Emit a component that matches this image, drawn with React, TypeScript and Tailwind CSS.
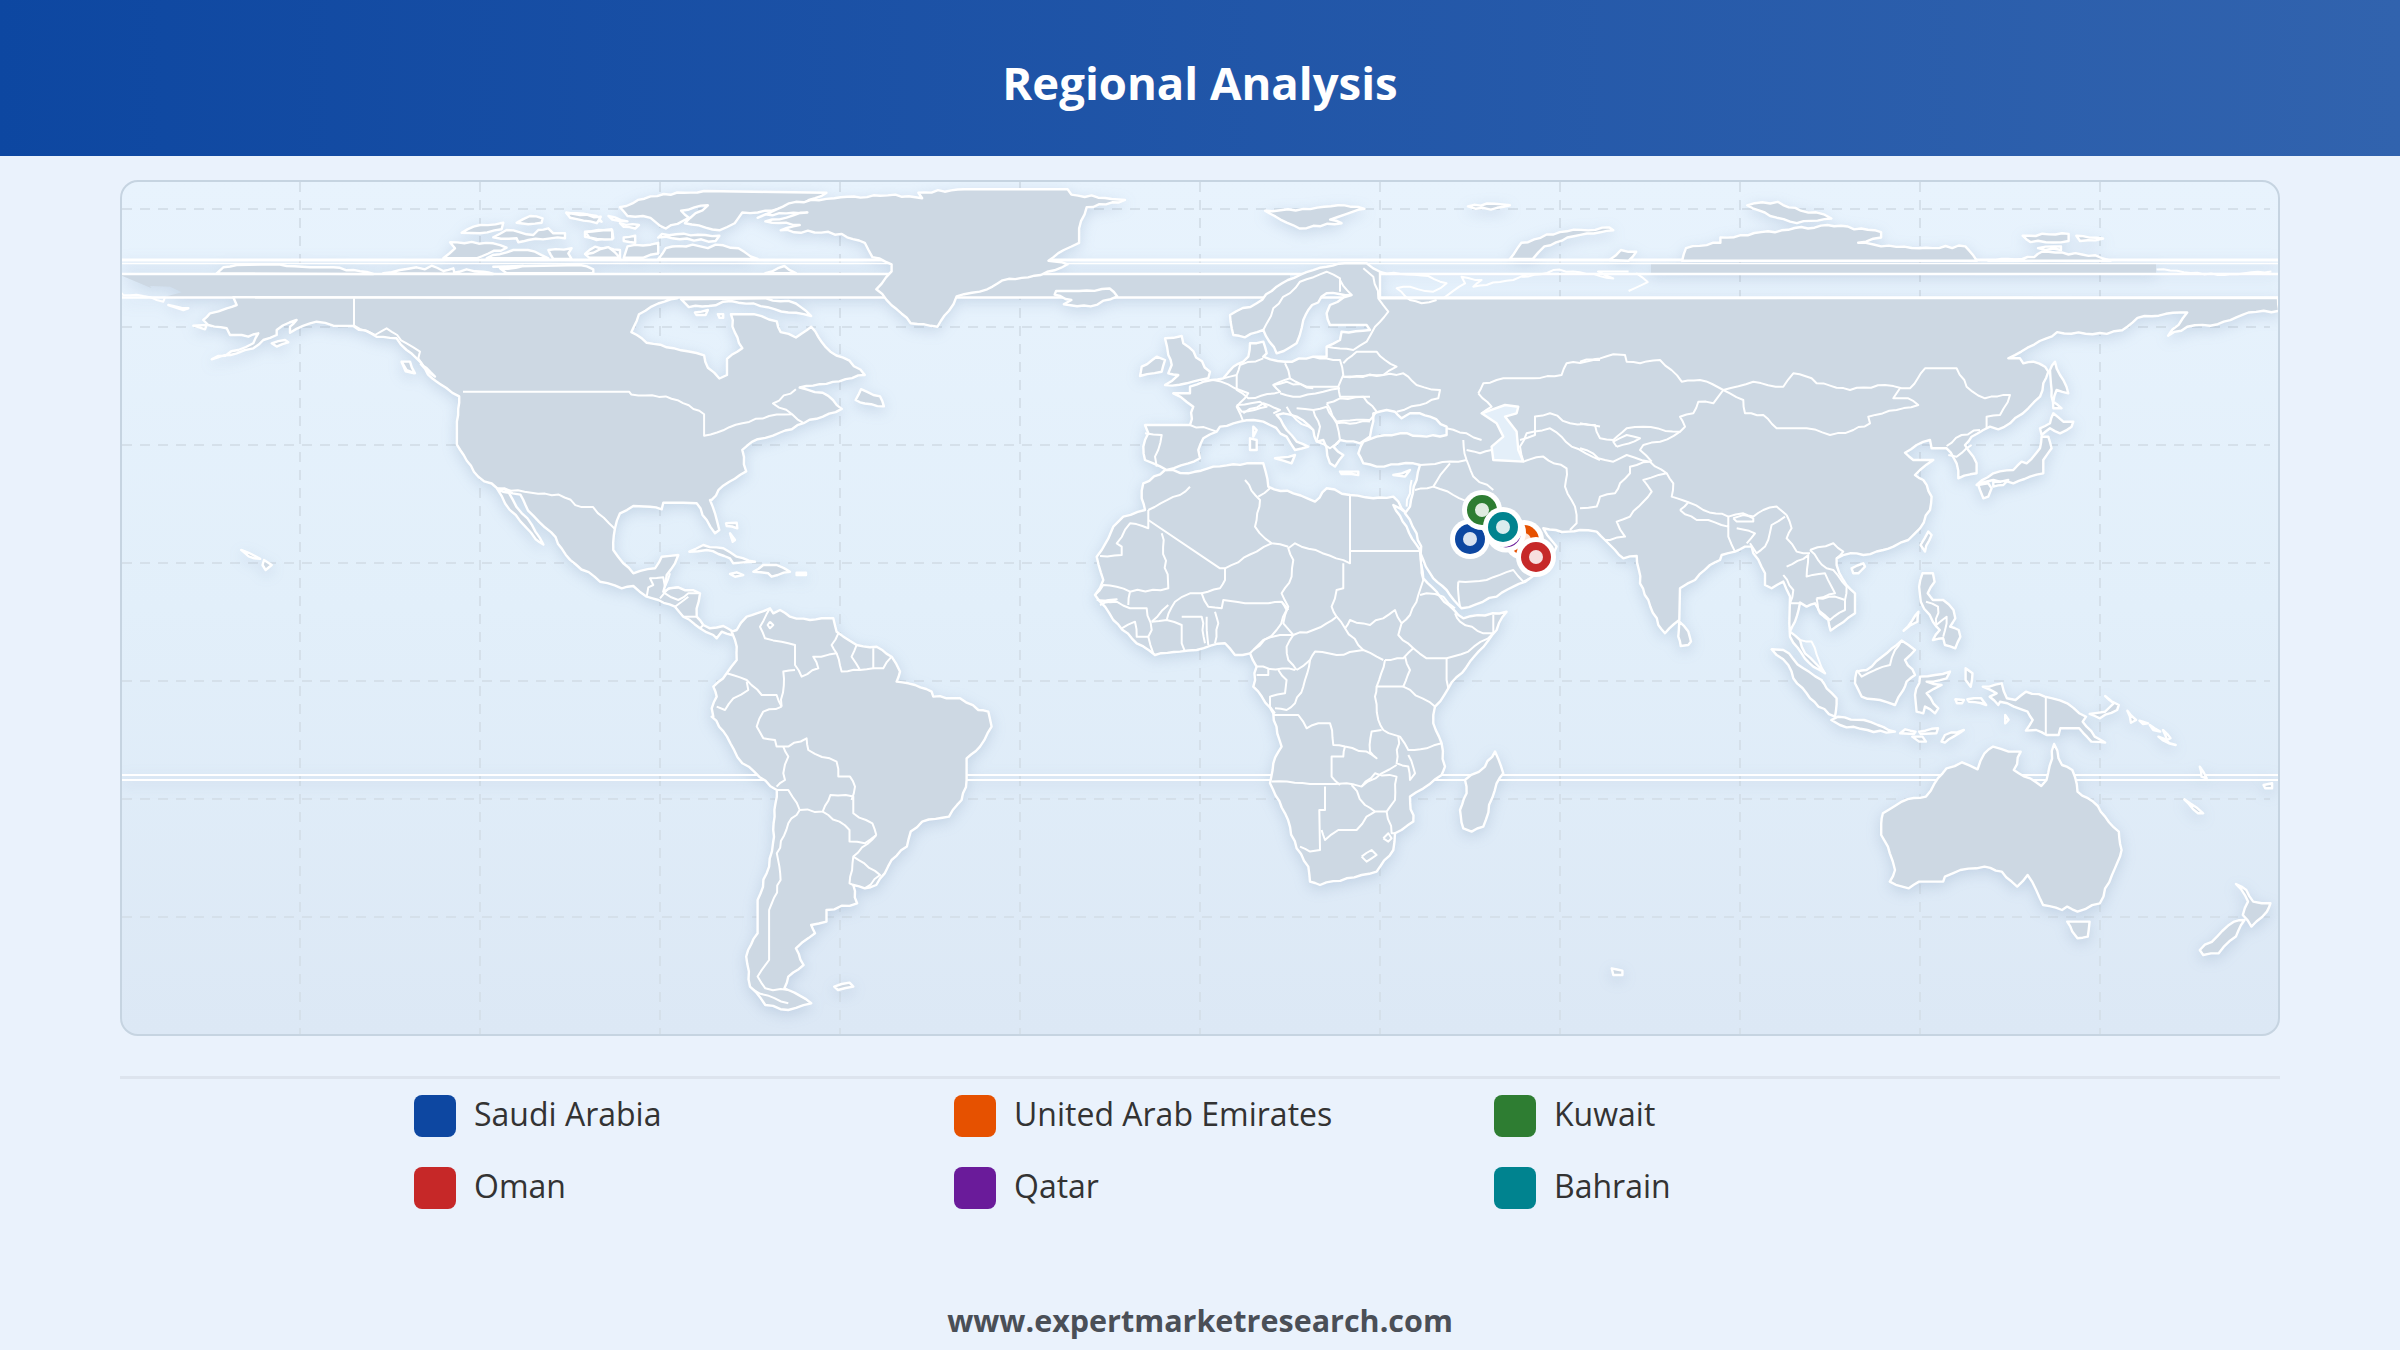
type Z = [number, number, number, number];

// each zoom crop of the map has its own origin and scale, points are written in crop pixels
const Z1: Z = [0, 0, 0.7653, 0.3571];
const Z2: Z = [1200, 0, 0.7653, 0.3571];
const Z3: Z = [0, 560, 0.7653, 0.3333];
const Z4: Z = [1200, 560, 0.7653, 0.3333];
const Z7: Z = [1100, 250, 0.3333, 0.3333];
const Z8: Z = [1080, 480, 0.3333, 0.3333];
const Z9: Z = [1580, 320, 0.3333, 0.3333];
const Z10: Z = [1740, 560, 0.3444, 0.3333];
const Z11: Z = [120, 180, 0.3333, 0.3333];
const Z12: Z = [600, 500, 0.3333, 0.3333];

const seg = (z: Z, s: string) =>
  s
    .trim()
    .split(/\s+/)
    .map((p) => {
      const [x, y] = p.split(',').map(Number);
      return `${(z[0] + x * z[2]).toFixed(1)},${(z[1] + y * z[3]).toFixed(1)}`;
    })
    .join(' ');

// breaks up medium edges so coasts look hand-surveyed, axis-aligned and long edges stay straight
const rough = (points: string, closed: boolean) => {
  const pts = points.trim().split(/\s+/).map((p) => p.split(',').map(Number));
  const out: string[] = [];
  const count = closed ? pts.length : pts.length - 1;
  for (let i = 0; i < count; i++) {
    const [x1, y1] = pts[i];
    const [x2, y2] = pts[(i + 1) % pts.length];
    out.push(`${x1},${y1}`);
    const dx = x2 - x1;
    const dy = y2 - y1;
    const len = Math.hypot(dx, dy);
    if (len < 9 || len > 70 || Math.abs(dx) < 1 || Math.abs(dy) < 1) continue;
    const steps = Math.max(2, Math.round(len / 7));
    for (let k = 1; k < steps; k++) {
      const t = k / steps;
      const h = Math.sin((x1 + k) * 12.9898 + (y1 - k) * 78.233) * 43758.5453;
      const off = (h - Math.floor(h) - 0.5) * Math.min(2.6, len * 0.12);
      out.push(`${(x1 + dx * t - (dy / len) * off).toFixed(1)},${(y1 + dy * t + (dx / len) * off).toFixed(1)}`);
    }
  }
  if (!closed) out.push(pts[pts.length - 1].join(','));
  return out.join(' ');
};

const LAND: string[] = [
  // north america
  seg(Z11, '340,352 350,375 320,385 270,400 250,420 265,435 320,445 330,465 365,465 385,470 415,460 400,490 355,510 275,538 350,520 400,505 430,480 470,465 470,450 530,420 510,440 510,458 570,430 590,425 640,437 700,438 770,470 830,475 860,510 890,535 915,565 945,590') +
    ' ' + seg(Z1, '550,1020 565,1060 575,1075 600,1110 597,1180 597,1245 610,1290 625,1335 650,1368 680,1385 690,1430 720,1490 745,1568') +
    ' ' + seg(Z12, '0,245 65,265 100,258 140,290 175,300 225,320 250,350 300,385 340,405 350,415 365,395 395,405 400,395 370,378 330,385 310,375 290,350 300,280 235,262 210,265 190,275 200,225 225,190 235,165 185,170 165,205 100,220 70,190 40,150 45,85 60,40 100,18 150,20 185,28 190,8 250,8 290,10 320,60 345,100 358,90 345,40 330,0') +
    ' ' + seg(Z1, '930,1400 945,1360 975,1320 970,1260 990,1230 1010,1220 1050,1185 1100,1145 1075,1100 1045,1085 1080,1075 1130,1050 1110,1010 1085,985 1060,915 1040,945 1020,930 1015,900 985,880 955,880 960,930 970,975 950,1005 950,1050 940,1060 925,1030 920,995 880,975 845,960 825,930 835,880 860,850 885,835'),
  seg(Z1, '890,838 900,860 935,855 945,845 985,850 1030,875 1060,885 1040,850 1000,835'),
  seg(Z1, '650,1370 665,1380 675,1420 695,1470 710,1525 700,1510 680,1460 660,1410'),
  seg(Z1, '1125,1090 1150,1110 1155,1138 1130,1130 1118,1120'),
  seg(Z1, '525,1015 535,1015 540,1045 530,1040'),
  seg(Z1, '908,875 925,868 922,882 910,882'),
  seg(Z1, '938,880 945,880 945,890 940,890'),
  seg(Z1, '315,1540 325,1548 340,1565 325,1558'),
  seg(Z3, '345,0 355,15 347,30 343,15'),
  // sliver between the artefact lines
  seg(Z11, '290,280 310,262 350,255 460,253 500,258 570,262 640,262 700,270 760,282'),
  seg(Z11, '790,280 840,270 890,262 915,268 935,257 970,273 1000,265 1003,278 1040,268 1090,275 1120,282'),
  seg(Z11, '1120,260 1210,258 1140,265 1160,280 1420,280 1420,268 1380,255'),
  seg(Z1, '1000,765 1025,745 1040,765'),
  // arctic canada
  seg(Z11, '1025,158 1080,135 1150,128 1145,148 1080,160'),
  seg(Z11, '1190,128 1230,108 1268,115 1265,128 1225,133'),
  seg(Z11, '1120,172 1160,150 1240,165 1255,150 1285,145 1300,160 1335,160 1335,175 1225,180 1195,187 1190,175'),
  seg(Z11, '970,235 1005,205 990,187 1120,190 1160,203 1070,235'),
  seg(Z11, '1100,235 1180,210 1245,215 1285,235'),
  seg(Z11, '1285,210 1355,205 1345,220 1355,237 1300,237'),
  seg(Z11, '1340,100 1445,125 1430,108 1370,100'),
  seg(Z11, '1395,155 1475,148 1480,175 1430,180 1395,170'),
  seg(Z11, '1395,222 1425,200 1500,210 1500,237 1430,237'),
  seg(Z11, '455,490 495,480 505,487 470,500'),
  seg(Z11, '845,545 870,545 885,580 860,570'),
  seg(Z11, '145,375 205,385 190,390'),
  seg(Z11, '220,437 260,435 255,448'),
  seg(Z1, '740,595 785,607 780,625 745,610'),
  seg(Z1, '795,605 820,620 800,615'),
  seg(Z1, '765,650 800,645 800,670 770,665'),
  seg(Z1, '810,625 835,630 830,640 815,635'),
  seg(Z1, '815,665 830,660 830,680 815,675'),
  seg(Z1, '765,712 795,692 810,722 770,722'),
  seg(Z1, '815,722 820,690 860,680 860,710 840,722'),
  seg(Z1, '810,580 850,550 920,535 1080,540 1050,570 1000,590 970,595 960,625 940,645 895,625 925,575 890,590 900,610 870,640 850,610 820,605'),
  seg(Z1, '865,655 940,660 935,675 860,665'),
  seg(Z1, '860,725 870,695 905,685 925,695 935,685 965,695 990,725'),
  // greenland and iceland
  seg(Z1, '990,610 1040,565 1090,555 1150,548 1170,545 1205,555 1200,540 1260,530 1395,530 1400,545 1470,560 1420,580 1410,640 1410,680 1390,700 1370,730 1395,740 1360,770 1310,785 1290,810 1250,830 1240,870 1225,915 1190,905 1165,855 1145,810 1165,760 1165,740 1140,720 1130,680 1100,655 1020,645 1045,630 1000,620 1055,595 1000,600'),
  seg(Z1, '1380,815 1410,815 1450,808 1460,830 1425,858 1390,852 1400,840 1378,825'),
  // caribbean
  seg(Z12, '268,155 310,135 370,145 410,170 465,185 400,190 390,175 320,150'),
  seg(Z12, '460,215 490,195 530,195 570,215 515,230 505,220'),
  seg(Z12, '390,222 410,217 430,225 405,230'),
  seg(Z12, '590,218 618,218 618,225 590,225'),
  seg(Z12, '378,70 410,68 412,85 380,78'),
  seg(Z12, '390,100 405,120 398,125'),
  // south america
  seg(Z12, '410,390 440,350 470,340 510,325 520,340 540,330 570,350 630,360 665,355 700,355 710,395 770,435 830,440 875,470 900,515 890,545 925,550 945,555 995,575 1000,590 1080,595 1135,630 1165,635 1175,680 1140,740 1100,775 1100,840 1085,900') +
    ' ' + seg(Z3, '1245,750 1240,770 1205,785 1190,815 1185,860 1165,900 1145,975 1130,985 1115,975 1120,1030 1080,1050 1080,1085 1060,1095 1065,1120 1040,1165 1050,1215 1030,1250 1025,1285 1030,1290 1060,1330 1030,1350 1000,1335 980,1280 975,1190 990,1120 990,1020 1005,920 1010,850 1015,690 970,610 950,530 930,470') +
    ' ' + seg(Z12, '340,650 335,625 350,590 340,560 380,520 410,480 405,420 395,395'),
  seg(Z3, '1090,1280 1110,1268 1115,1280 1095,1290'),
  // africa
  seg(Z7, '130,700 195,660 265,670 340,650 440,640 490,640 505,710 580,730 645,755 680,715 750,735 820,745 880,740 920,790 880,765 920,830 960,900 970,985 1020,1040 1075,1095') +
    ' ' + seg(Z8, '1150,415 1280,395 1250,450 1170,545 1105,625 1065,680 1060,730 1085,790 1095,860 1085,885 990,950 1000,1025 945,1060 940,1110 890,1175 800,1195 720,1215 690,1205 685,1160 650,1105 615,1000 570,910 580,850 605,800 580,700 520,620 530,560 510,520 465,525 435,490 350,510 300,515 225,525 170,490 100,420 45,345 70,300 50,230 65,210 100,140 130,110 195,90 185,55'),
  seg(Z8, '1245,815 1270,880 1250,910 1210,1040 1175,1055 1150,1045 1140,990 1160,940 1155,900 1215,860'),
  // eurasia
  seg(Z7, '840,145 840,145') +
    ' 2278,298 ' + seg(Z2, '1410,870 1370,875 1330,908 1290,915 1265,940 1290,875 1225,890 1205,925 1185,935 1120,930 1090,965') +
    ' ' + seg(Z9, '1285,115 1320,115 1330,130 1360,125 1395,140 1405,155 1390,190 1380,230 1345,265 1290,310 1255,328 1230,320 1210,330 1175,350 1155,375 1190,430 1190,460 1135,475 1130,430 1100,385 1055,385 1050,360 1010,375 975,398 1000,420 1060,420 1020,450 1005,465 1030,480 1055,530 1050,570 1020,625 985,660 940,680 910,690 850,705 810,700 770,715 770,735 790,780 825,820 825,880 752,932 745,900 720,880 705,850 680,860 660,848 645,905 630,935 660,960 675,1000 735,1060 700,1040 665,1000 630,950 628,910 630,830 610,785 575,805 555,795 555,760 520,700 515,680 495,680 465,695 425,705 420,720 390,735 345,780 300,805 298,900 255,940 235,915 205,840 180,790 170,708 130,715 105,690 75,660 50,635 0,630') +
    ' ' + seg(Z7, '1405,845 1330,835 1370,890 1345,940 1290,985 1240,1010 1190,1040 1085,1075 1075,1065 1040,1020 1000,985 970,930 950,850 915,790 930,770 950,690 960,645 940,640 830,650 790,640 775,610 790,575 830,560 900,550 980,560 1040,555 1040,530 990,500 960,490 930,490 905,505 885,485 860,480 820,490 810,560 780,580 720,570 700,590 730,615 705,650 690,640 670,570 650,575 640,540 590,500 550,490 530,495 560,540 590,575 625,590 585,600 560,560 510,525 490,515 460,510 420,515 360,530 350,545 310,565 295,600 300,625 265,640 200,660 160,640 135,630 130,590 145,550 135,525 270,525 280,470 220,430 270,430 270,410 335,390 370,385 400,350 430,335 445,320 450,280 490,275 500,310 490,320 555,335 640,320 680,320 680,290 720,270 725,245 810,240 800,225 690,225 680,190 690,165 755,135 680,130 625,180 610,210 590,280 530,310 490,240 435,262 400,255 390,195 470,160 530,110 600,75 680,50 735,40 800,40 840,65'),
  // uk, ireland, med islands
  seg(Z7, '195,265 245,258 250,280 265,290 330,365 325,385 260,400 195,405 235,375 205,370 215,345 205,315'),
  seg(Z7, '125,350 170,320 195,330 185,365 120,378'),
  seg(Z7, '460,530 470,540 460,560'),
  seg(Z7, '450,565 470,570 470,600 450,600'),
  seg(Z7, '525,625 585,615 575,640'),
  seg(Z7, '720,665 775,665 775,675 725,672'),
  seg(Z7, '880,675 930,660 915,680'),
  // arctic russia
  seg(Z2, '85,590 135,585 180,575 215,585 190,600 170,615 185,625 130,640 105,615'),
  seg(Z2, '350,578 375,570 405,575 380,587'),
  seg(Z2, '405,725 420,680 470,650 535,637 540,645 480,665 450,690 435,725'),
  seg(Z2, '715,575 755,565 785,590 815,600 825,612 780,625 745,605'),
  seg(Z2, '630,730 635,695 680,680 680,665 760,645 820,630 890,650 890,665 860,680 890,690 940,695 1000,690 1015,730'),
  seg(Z2, '1030,730 1090,720 1100,705 1170,715 1190,730'),
  seg(Z2, '1075,660 1135,655 1135,675 1085,678'),
  seg(Z2, '1145,660 1180,668 1150,675'),
  seg(Z2, '1095,695 1125,690 1125,700'),
  seg(Z2, '535,728 550,700 570,705 560,730'),
  // east asia islands
  seg(Z9, '1410,150 1425,125 1440,165 1465,220 1430,210 1420,245 1445,265 1420,265 1415,210'),
  seg(Z9, '1420,280 1450,305 1480,305 1475,320 1440,340 1410,325 1385,345 1380,325 1410,310'),
  seg(Z9, '1385,350 1405,350 1415,385 1390,420 1390,460 1350,470 1300,490 1240,480 1190,495 1240,460 1300,450 1325,425 1340,430 1380,385'),
  seg(Z9, '1195,495 1225,490 1235,505 1225,530 1210,535 1200,510'),
  seg(Z9, '1240,485 1285,480 1270,495 1240,500'),
  seg(Z9, '1045,635 1055,645 1035,695 1022,675'),
  seg(Z9, '815,745 850,730 855,740 835,760 820,760'),
  seg(Z9, '298,905 325,935 333,965 325,975 302,978 295,950'),
  seg(Z9, '575,988 610,990 670,1045 725,1080 740,1105 770,1135 765,1190 715,1160 680,1120 640,1075 625,1035'),
  seg(Z9, '830,1055 860,1050 920,1000 965,962 1005,990 975,1020 1005,1065 980,1085 970,1110 945,1155 900,1140 845,1130 825,1090'),
  seg(Z9, '1020,1070 1110,1055 1100,1075 1040,1085 1085,1095 1040,1120 1060,1150 1075,1165 1065,1180 1035,1160 1030,1180 1010,1175 1005,1125'),
  // oceania
  seg(Z10, '530,40 560,40 565,65 545,100 560,120 590,120 620,150 625,175 610,200 635,210 640,230 625,265 595,255 590,235 560,240 580,210 560,185 525,125 520,80'),
  seg(Z10, '475,212 510,165 518,155 515,185'),
  seg(Z10, '265,480 285,470 360,480 400,495 450,515 425,518 370,510 290,495'),
  seg(Z10, '465,520 480,508 510,515 505,522'),
  seg(Z10, '520,515 575,505 570,520 525,522'),
  seg(Z10, '500,530 530,530 540,545 520,545'),
  seg(Z10, '585,545 595,525 650,510 620,530 595,548'),
  seg(Z10, '705,380 760,370 775,415 800,420 830,395 885,410 950,430 1005,470 995,485 1030,530 1060,548 1020,545 985,505 930,505 925,525 890,525 860,510 830,512 850,480 835,455 755,425 750,435 725,410 745,400'),
  seg(Z10, '1015,462 1060,455 1085,430 1060,408 1100,435 1095,450 1045,475'),
  seg(Z10, '1125,452 1150,480 1135,488'),
  seg(Z10, '1160,482 1185,490 1170,492'),
  seg(Z10, '1190,495 1220,515 1200,510'),
  seg(Z10, '1228,510 1250,535 1240,540'),
  seg(Z10, '1215,530 1265,555 1245,550'),
  seg(Z10, '655,325 675,340 670,380 655,360'),
  seg(Z10, '625,418 650,420 645,430 630,430'),
  seg(Z10, '660,418 700,415 715,435 665,425'),
  seg(Z10, '770,465 780,480 770,490'),
  seg(Z10, '1335,620 1355,655 1340,650'),
  seg(Z10, '1290,718 1345,760 1330,760'),
  seg(Z10, '1520,675 1545,670 1545,685 1525,685'),
  seg(Z10, '415,760 470,725 540,710 565,670 600,625 645,607 690,628 710,580 735,560 780,575 815,575 795,630 875,678 890,660 912,552 935,615 965,630 980,695 1025,725 1060,770 1100,815 1108,870 1080,945 1045,1030 980,1055 950,1040 935,1050 880,1035 860,990 835,945 805,980 760,935 710,920 640,930 595,950 590,965 520,965 490,985 435,965 450,930 435,880 410,825 410,790'),
  seg(Z10, '950,1085 1015,1085 1010,1130 980,1135 965,1115'),
  seg(Z10, '1440,972 1470,990 1490,1025 1540,1030 1530,1055 1485,1100 1460,1065 1475,1025'),
  seg(Z10, '1465,1080 1440,1130 1390,1180 1345,1185 1335,1170 1385,1130 1435,1085'),
  seg(Z4, '538,1225 552,1232 552,1245 540,1245'),
].map((p) => rough(p, true));

// small lakes and seas that sit on top of the land
const WATER: string[] = [seg(Z7, '1145,490 1215,465 1255,470 1250,490 1215,500 1250,545 1255,600 1270,635 1180,630 1175,590 1210,560 1190,520')];

const BORDERS: string[] = [
  // north america
  seg(Z1, '605,1097 822,1097 825,1105 870,1110 900,1135 920,1160 920,1220 945,1205 970,1185 1005,1165 1035,1160 1010,1130 1040,1090'),
  seg(Z1, '1050,1185 1035,1160'),
  seg(Z11, '702,355 702,435'),
  seg(Z11, '700,435 765,465 800,445 860,490 900,515 895,535 915,565'),
  seg(Z1, '650,1368 730,1385 760,1420 775,1420 803,1480'),
  seg(Z12, '140,290 145,262 160,255 150,235 190,232 195,260 210,220'),
  seg(Z12, '180,295 205,265 235,262'),
  seg(Z12, '195,280 235,300 265,280 300,280'),
  seg(Z12, '225,320 265,290'),
  seg(Z12, '250,350 290,350'),
  seg(Z12, '300,385 310,375'),
  // south america
  seg(Z12, '380,520 440,540 485,585 530,585 545,620'),
  seg(Z12, '350,620 375,630 400,595 445,570 440,545'),
  seg(Z12, '510,325 480,380 495,415 545,425 585,435 585,495 605,530 655,505 640,470 710,460 695,435 715,400'),
  seg(Z12, '510,365 520,375 510,385 503,375 510,365'),
  seg(Z12, '545,620 550,515 585,510'),
  seg(Z12, '710,460 725,515 780,510 755,470 770,435'),
  seg(Z12, '780,510 820,505 820,445'),
  seg(Z12, '820,505 850,505 875,470'),
  seg(Z12, '545,620 490,635 470,680 490,715 525,720 530,740 565,740 620,715 625,750 710,785 715,830 750,830 765,860 755,900'),
  seg(Z12, '550,740 565,770 550,820 555,840 530,860'),
  seg(Z3, '1045,750 1075,755 1085,705 1115,710 1115,760 1140,790 1145,825'),
  seg(Z3, '1075,755 1110,810 1110,845 1130,850 1145,825'),
  seg(Z3, '1145,825 1115,890 1110,970 1115,975'),
  seg(Z3, '1115,890 1150,945 1130,985'),
  seg(Z3, '1015,690 1030,690 1045,750 1030,790 1015,880 1020,960 1005,1050 1005,1130 1005,1200 990,1250 1000,1285 1030,1290'),
  seg(Z3, '985,1290 1030,1330'),
  // africa
  seg(Z8, '205,90 205,145 150,130 110,190 125,200 125,225 60,228'),
  seg(Z8, '205,120 420,265 435,265 530,215 575,190'),
  seg(Z8, '245,160 265,325 150,335 145,375'),
  seg(Z8, '150,335 110,320 70,315 45,345'),
  seg(Z8, '495,0 540,60 525,140 575,190 625,200'),
  seg(Z8, '330,20 300,45 205,90'),
  seg(Z8, '535,50 570,25'),
  seg(Z8, '810,45 810,250 645,190 625,205 640,240 635,290 605,340 625,380 610,430 640,465'),
  seg(Z8, '810,213 1020,213'),
  seg(Z8, '435,265 435,300 420,325 365,340 385,380 425,385 430,360 495,370 565,370 605,365 625,390'),
  seg(Z8, '365,340 330,340 285,365 260,420'),
  seg(Z8, '790,250 790,325 770,330 755,380 770,410 740,430 700,450 640,465 620,500 625,540 650,570'),
  seg(Z8, '650,570 690,540 705,515 770,525 850,510 910,540'),
  seg(Z8, '770,410 795,445 850,510'),
  seg(Z8, '795,445 810,420 870,435 945,390 965,430 955,465 1000,505 970,535 915,540'),
  seg(Z8, '1020,213 1030,300 1015,345 990,405 965,430'),
  seg(Z8, '1020,345 1040,340 1090,350 1125,385'),
  seg(Z8, '1000,505 1040,535 1100,535 1165,515 1240,460 1210,460 1140,425 1125,400'),
  seg(Z8, '1240,460 1240,405'),
  seg(Z8, '1100,535 1100,600 1105,625'),
  seg(Z8, '975,530 990,570 970,620 1065,680'),
  seg(Z8, '915,540 890,620 970,620'),
  seg(Z8, '890,620 885,650 895,720 910,750 960,770 985,810 1040,805 1085,790'),
  seg(Z8, '905,750 875,755 870,815 890,835 860,815 795,800 760,795 750,730 715,730 680,745 655,705 580,705'),
  seg(Z8, '690,540 670,620 645,670 620,690 585,685'),
  seg(Z8, '530,560 645,570'),
  seg(Z8, '595,570 620,600 615,640 570,650 570,680 585,700'),
  seg(Z8, '530,585 565,585 565,565'),
  seg(Z8, '575,905 690,912 765,912 800,910 845,920 905,880 950,855'),
  seg(Z8, '795,800 790,830 755,830 755,890 780,915'),
  seg(Z8, '955,770 950,850 985,860 990,900 1005,880 985,825'),
  seg(Z8, '845,920 885,880 950,890 945,960 920,995 885,995 855,975 815,915'),
  seg(Z8, '735,920 735,990 718,990 720,1110 690,1115 660,1100'),
  seg(Z8, '725,1050 735,1080 775,1050 830,1050 860,1010 885,995'),
  seg(Z8, '920,995 935,1060 945,1060'),
  seg(Z8, '910,1075 925,1060 935,1075 925,1085 910,1075'),
  seg(Z8, '845,1130 875,1110 890,1125 860,1145 845,1130'),
  seg(Z8, '50,360 110,365 150,385 200,385 215,450 205,470 220,520'),
  seg(Z8, '125,445 165,425 170,470 205,470'),
  seg(Z8, '215,425 260,420 305,435 305,490 315,515'),
  seg(Z8, '305,410 365,410 375,490'),
  seg(Z8, '380,410 385,495'),
  seg(Z8, '405,395 415,430 405,490'),
  seg(Z8, '215,425 265,375'),
  seg(Z8, '605,365 620,390 590,450 520,510 510,520'),
  seg(Z8, '520,510 550,480 600,465 640,465'),
  seg(Z8, '60,365 110,358 60,375'),
  // europe
  seg(Z7, '490,240 520,175 600,95 680,65 720,85 720,125'),
  seg(Z7, '720,90 755,135'),
  seg(Z7, '790,55 820,80 835,145 865,185 825,230 800,275 760,300 680,290'),
  seg(Z7, '730,340 770,305 830,305 855,330 890,350 850,375 730,380'),
  seg(Z7, '555,340 570,385 620,410 715,410 730,375 720,330 640,320'),
  seg(Z7, '410,375 420,345 490,325'),
  seg(Z7, '570,385 520,405 540,425 445,445 410,420 410,375'),
  seg(Z7, '520,405 560,395 640,415'),
  seg(Z7, '540,430 600,440 670,425 720,415'),
  seg(Z7, '730,380 850,375 910,370 950,405 1020,420 1015,445 960,465 890,485'),
  seg(Z7, '810,440 720,440 715,410'),
  seg(Z7, '680,460 720,445 790,440 830,485 810,510 710,515 680,460'),
  seg(Z7, '710,520 810,515'),
  seg(Z7, '640,480 680,470 710,520 720,570'),
  seg(Z7, '410,465 480,455 500,470 425,485 410,465'),
  seg(Z7, '430,490 490,460 540,480 520,490'),
  seg(Z7, '340,390 405,415 445,430 410,470 430,515'),
  seg(Z7, '270,525 350,545'),
  seg(Z7, '135,550 185,555 165,620 170,650'),
  seg(Z7, '370,385 410,375'),
  seg(Z7, '590,475 640,480 660,530 650,575'),
  seg(Z7, '650,575 690,595 720,570'),
  seg(Z7, '560,470 590,510 640,540'),
  // middle east, central asia
  seg(Z7, '1040,535 1100,550 1145,570'),
  seg(Z7, '960,645 1050,635 1100,630'),
  seg(Z7, '1090,570 1100,630 1120,680 1180,720'),
  seg(Z7, '1000,710 1060,735 1130,770'),
  seg(Z7, '945,720 1000,710 1050,640'),
  seg(Z7, '935,690 920,770'),
  seg(Z7, '1075,995 1160,990 1240,960 1270,995 1290,985'),
  seg(Z7, '1075,995 1080,1070'),
  seg(Z7, '1135,430 1150,400 1210,385 1300,385 1385,375 1400,340 1500,330'),
  seg(Z7, '1135,430 1175,470 1145,490'),
  seg(Z7, '1100,600 1140,610 1175,600'),
  seg(Z7, '1270,635 1330,620 1400,655 1395,710 1425,770 1430,820 1410,840'),
  seg(Z7, '1270,635 1260,590 1280,550 1350,535 1415,590 1500,630'),
  seg(Z7, '1260,570 1305,555 1305,500 1350,490 1410,520 1500,530'),
  // asia
  seg(Z9, '0,125 100,103 135,105 140,125 180,130 240,120 305,185 360,180 430,210 520,185 610,200 640,160 695,175 710,190 810,210 915,195 965,205 990,205 1035,145 1130,145 1160,200 1215,235 1290,225 1260,285 1220,290 1220,325'),
  seg(Z9, '430,210 490,240 495,280 550,285 590,325 680,325 750,345 820,330 870,310 865,290 950,270 1015,255 985,235 940,235 960,205'),
  seg(Z9, '1100,378 1145,345 1200,330'),
  seg(Z9, '1105,405 1130,410 1175,375'),
  seg(Z9, '430,210 400,250 355,245 340,280 300,290 315,320 300,335 190,320 140,325 100,360 60,355 45,315 0,310'),
  seg(Z9, '300,335 240,365 190,375 180,390 215,425'),
  seg(Z9, '110,380 180,355 140,345 100,365 110,380'),
  seg(Z9, '0,385 75,420 100,425 140,405 210,425 150,440 150,460 120,490 105,520 60,530 50,560 0,565'),
  seg(Z9, '210,425 260,460 190,480 215,515 150,590 110,605 135,650 90,660 75,660'),
  seg(Z9, '300,570 325,547 370,570 445,590 445,620 385,600 350,600 300,570'),
  seg(Z9, '460,595 490,585 520,595 520,605 470,605 460,595'),
  seg(Z9, '260,460 280,490 275,530 325,547'),
  seg(Z9, '445,590 490,580 520,590 550,570 590,560 620,585'),
  seg(Z9, '445,620 445,650 465,695'),
  seg(Z9, '470,625 525,640 500,670'),
  seg(Z9, '615,590 575,615 555,680 530,700 510,670'),
  seg(Z9, '620,585 635,625 620,655 650,695 690,700'),
  seg(Z9, '690,690 760,670 790,695 770,715'),
  seg(Z9, '620,740 685,705 680,770 735,760 765,820 710,835'),
  seg(Z9, '690,690 740,745 760,750 800,800 795,840'),
  seg(Z9, '710,835 765,830 795,840 795,870 750,900 715,870 710,835'),
  seg(Z9, '610,765 640,810 630,850 660,850'),
  seg(Z9, '660,960 695,965 735,1060'),
  seg(Z9, '830,1050 845,1070 930,1035 945,990 965,962'),
  seg(Z10, '888,410 888,525'),
  seg(Z10, '540,125 575,140 570,195 600,170 590,230'),
  // coast outlines with no fill over the gap in the russian shape
  seg(Z7, '840,65 985,78 1040,100 1000,125 930,110 890,115 930,150 965,160 1010,150'),
  seg(Z7, '1030,145 1095,100 1085,80 1145,90 1120,110 1160,105 1240,90 1290,72'),
  seg(Z2, '560,815 585,790 570,765'),
  seg(Z2, '420,775 470,755 540,780 520,760 560,760'),
  seg(Z2, '1250,755 1330,770 1400,760'),
  seg(Z11, '0,335 10,345 70,348 110,360 130,365 135,352'),
].map((p) => rough(p, false));

const H_LINES = [209, 327, 445, 563, 681, 799, 917];
const V_LINES = [300, 480, 660, 840, 1020, 1200, 1380, 1560, 1740, 1920, 2100];

// the broken wrap-around bands of the source map
const BANDS = [
  seg(Z11, '0,285 1500,285') + ' 1290,274 1290,298 ' + seg(Z11, '130,352 185,337 150,320 90,318 95,325'),
  '1651,264 2156,264 2156,273 1651,273',
];
const BAND_LINES = [
  [260, 3],
  [263.5, 1.5],
  [274, 2.5],
  [297.5, 2.5],
  [775, 2],
  [780, 2],
];

const PINS = [
  { x: 1470, y: 539, color: '#0d47a1' },
  { x: 1524, y: 540, color: '#e65100' },
  { x: 1482, y: 510, color: '#2e7d32' },
  { x: 1536, y: 557, color: '#c62828' },
  { x: 1506, y: 532.5, color: '#6a1b9a' },
  { x: 1503, y: 527, color: '#00838f' },
];

const LEGEND = [
  { name: 'Saudi Arabia', color: 'bg-[#0d47a1]' },
  { name: 'United Arab Emirates', color: 'bg-[#e65100]' },
  { name: 'Kuwait', color: 'bg-[#2e7d32]' },
  { name: 'Oman', color: 'bg-[#c62828]' },
  { name: 'Qatar', color: 'bg-[#6a1b9a]' },
  { name: 'Bahrain', color: 'bg-[#00838f]' },
];

function WorldMap() {
  return (
    <svg viewBox="122 182 2156 852" width={2156} height={852} className="block">
      <g stroke="#d5e0ea" strokeWidth={2} strokeDasharray="10 8" fill="none">
        {H_LINES.map((y) => (
          <line key={y} x1={122} x2={2270} y1={y} y2={y} />
        ))}
        {V_LINES.map((x) => (
          <line key={x} x1={x} x2={x} y1={182} y2={1034} />
        ))}
      </g>
      <g className="drop-shadow-[0_4px_7px_rgba(90,120,160,0.2)]">
        {BANDS.map((p, i) => (
          <polygon key={i} points={p} fill="#cdd8e3" />
        ))}
        {BAND_LINES.map(([y, w]) => (
          <line key={y} x1={122} x2={2278} y1={y} y2={y} stroke="#ffffff" strokeWidth={w} />
        ))}
        <g fill="#cdd8e3" stroke="#ffffff" strokeWidth={2.4} strokeLinejoin="round">
          {LAND.map((p, i) => (
            <polygon key={i} points={p} />
          ))}
          {WATER.map((p, i) => (
            <polygon key={i} points={p} fill="#e4eff9" />
          ))}
        </g>
      </g>
      <g fill="none" stroke="#ffffff" strokeWidth={2} strokeLinejoin="round">
        {BORDERS.map((p, i) => (
          <polyline key={i} points={p} />
        ))}
      </g>
      {PINS.map((p) => (
        <g key={p.color}>
          <circle cx={p.x} cy={p.y} r={20} fill="#ffffff" />
          <circle cx={p.x} cy={p.y} r={15} fill={p.color} />
          <circle cx={p.x} cy={p.y} r={7} fill="#ffffff" fillOpacity={0.85} />
        </g>
      ))}
    </svg>
  );
}

export default function App() {
  return (
    <div className="h-[1350px] w-[2400px] overflow-hidden bg-[#eaf2fc] font-['Open_Sans','Noto_Sans',sans-serif]">
      <header className="flex h-[156px] items-center justify-center bg-gradient-to-r from-[#0d47a1] to-[#3163ae] pt-[8px]">
        <h1 className="text-[45.5px] font-bold text-white">Regional Analysis</h1>
      </header>
      <main className="px-[120px] pt-[24px]">
        <div className="h-[856px] overflow-hidden rounded-[18px] border-2 border-[#c6d4e1] bg-gradient-to-b from-[#e8f3fd] via-[#e2effa] to-[#dce8f5]">
          <WorldMap />
        </div>
        <div className="mt-[40px] h-[3px] bg-[#dde4ee]" />
        <div className="grid grid-cols-[540px_540px_auto] gap-y-[30px] pt-[16px] pl-[294px]">
          {LEGEND.map((item) => (
            <div key={item.name} className="flex items-center gap-[18px]">
              <span className={`h-[42px] w-[42px] rounded-[8px] ${item.color}`} />
              <span className="mb-[4px] text-[32px] leading-[38px] font-medium text-[#333333]">{item.name}</span>
            </div>
          ))}
        </div>
        <p className="mt-[90px] text-center text-[30.5px] leading-[42px] font-bold text-[#4a4f57]">
          www.expertmarketresearch.com
        </p>
      </main>
    </div>
  );
}
